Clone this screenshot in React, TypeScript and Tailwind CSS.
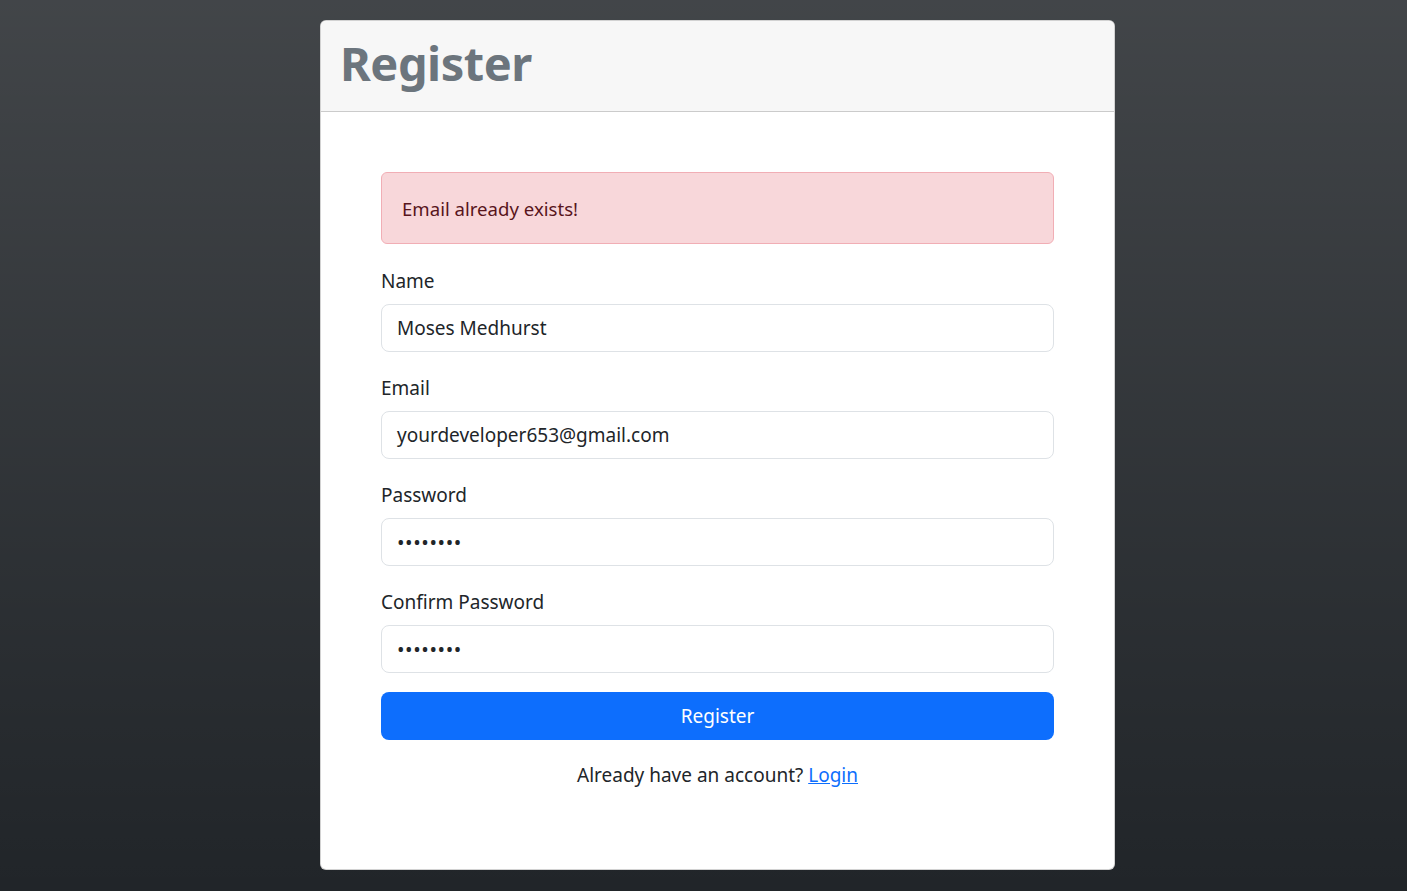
import React from "react";

export default function App() {
  return (
    <div
      className="min-h-screen w-full flex justify-center pl-[28px] pt-[20px] pb-[21px] bg-[#212529] bg-[linear-gradient(180deg,rgba(255,255,255,0.15),rgba(255,255,255,0))]"
      style={{ fontFamily: '"Noto Sans", "Open Sans", sans-serif' }}
    >
      <div className="w-[795px] h-[850px] bg-white border border-[rgba(0,0,0,0.175)] rounded-[6px] flex flex-col overflow-hidden">
        <div className="h-[91px] shrink-0 bg-[#f7f7f7] border-b border-[rgba(0,0,0,0.175)] flex items-center pl-[19px]">
          <h1 className="text-[47px] font-bold text-[#6c757d] leading-none tracking-[-0.5px] pb-[6px]">Register</h1>
        </div>
        <div className="px-[60px] pt-[60px] flex flex-col text-[#212529]">
          <div className="h-[72px] rounded-[6px] border border-[#f1aeb5] bg-[#f8d7da] text-[#58151c] flex items-center px-[20px] text-[18.6px] pt-[2px]">
            Email already exists!
          </div>
          <div className="mt-[22px] flex flex-col">
            <Field label="Name" value="Moses Medhurst" />
            <Field label="Email" value="yourdeveloper653@gmail.com" />
            <Field label="Password" value="••••••••" password />
            <Field label="Confirm Password" value="••••••••" password last />
          </div>
          <button className="mt-[19px] h-[48px] w-full rounded-[8px] bg-[#0d6efd] text-white text-[19px]">Register</button>
          <p className="mt-[20px] text-center text-[19px] leading-[30px]">
            Already have an account?{" "}
            <a href="#" className="text-[#0d6efd] underline">Login</a>
          </p>
        </div>
      </div>
    </div>
  );
}

function Field({ label, value, password, last }: { label: string; value: string; password?: boolean; last?: boolean }) {
  return (
    <div className={last ? "flex flex-col" : "flex flex-col mb-[21px]"}>
      <label className="text-[19px] leading-[30px] mb-[8px]">{label}</label>
      <div className="h-[48px] rounded-[8px] border border-[#dee2e6] flex items-center px-[15px] text-[19px]">
        {password ? (
          <span className="text-[20px] tracking-[0.6px] text-[#212529] pt-[2px]">{value}</span>
        ) : (
          <span>{value}</span>
        )}
      </div>
    </div>
  );
}
